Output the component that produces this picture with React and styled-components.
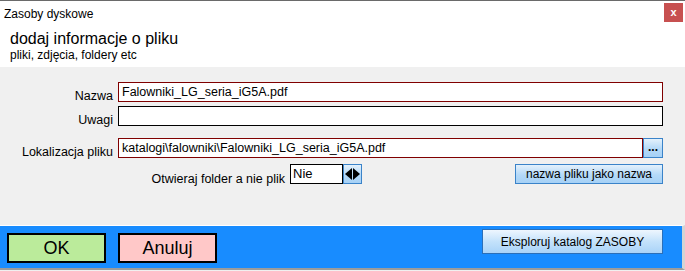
import React from "react";
import styled, { createGlobalStyle } from "styled-components";

const Global = createGlobalStyle`
  html, body { margin: 0; padding: 0; background: #f0f0f0; }
  body { font-family: "Liberation Sans", Arial, sans-serif; color: #000; }
  * { box-sizing: border-box; }
`;

const Window = styled.div`
  width: 685px;
  height: 271px;
  display: flex;
  flex-direction: column;
  background: #f0f0f0;
  border-top: 1px solid #6a6a6a;
  overflow: hidden;
`;

const Header = styled.div`
  background: #ffffff;
  height: 66px;
  display: flex;
  flex-direction: column;
`;

const TitleBar = styled.div`
  height: 24px;
  display: flex;
  align-items: flex-start;
  justify-content: space-between;
`;

const Title = styled.div`
  font-size: 12px;
  line-height: 14px;
  padding: 6px 0 0 4px;
`;

const CloseButton = styled.div`
  width: 19px;
  height: 19px;
  margin: 2px 2px 0 0;
  background: #c75050;
  color: #fff;
  font-weight: bold;
  font-size: 11px;
  line-height: 18px;
  text-align: center;
`;

const Heading = styled.div`
  margin-top: 5px;
  padding-left: 10px;
  font-size: 16px;
  line-height: 18px;
`;

const SubHeading = styled.div`
  padding-left: 10px;
  font-size: 12px;
  line-height: 14px;
`;

const Body = styled.div`
  height: 158px;
  padding-top: 15px;
`;

const FieldRow = styled.div`
  display: grid;
  grid-template-columns: 113px 545px;
  column-gap: 5px;
  align-items: end;
  margin-top: ${(p) => p.$gap || 0}px;
`;

const Label = styled.div`
  text-align: right;
  font-size: 12.5px;
  line-height: 14px;
  margin-bottom: -1px;
  white-space: nowrap;
`;

const TextBox = styled.div`
  height: 20px;
  background: #fff;
  border: 1px solid ${(p) => (p.$plain ? "#000" : "#800000")};
  font-size: 12.5px;
  line-height: 18px;
  padding-left: 3px;
  white-space: nowrap;
  overflow: hidden;
`;

const PathGroup = styled.div`
  display: flex;
`;

const PathBox = styled(TextBox)`
  flex: 1;
`;

const BlueButton = styled.div`
  background: linear-gradient(#e4f1fc, #b4d9f8 55%, #a6d1f6);
  border: 1px solid #3a83c9;
  color: #000;
  display: flex;
  align-items: center;
  justify-content: center;
  font-size: ${(p) => p.$size || 12}px;
  white-space: nowrap;
`;

const DotsButton = styled(BlueButton)`
  width: 20px;
  height: 20px;
  font-weight: bold;
  font-size: 12px;
  line-height: 12px;
  padding-bottom: 3px;
`;

const OptionRow = styled.div`
  display: flex;
  align-items: flex-end;
  margin-top: 6px;
  width: 663px;
`;

const OptionLabel = styled(Label)`
  width: 285px;
  margin-right: 5px;
  margin-bottom: -2px;
`;

const SelectBox = styled.div`
  width: 53px;
  height: 20px;
  background: #fff;
  border: 1px solid #000;
  font-size: 13px;
  line-height: 18px;
  padding-left: 2px;
`;

const SpinButton = styled(BlueButton)`
  width: 19px;
  height: 20px;
  gap: 0;
`;

const NameButton = styled(BlueButton)`
  margin-left: auto;
  width: 148px;
  height: 20px;
`;

const Footer = styled.div`
  height: 45px;
  background: #188cff;
  border-top: 1px solid #ffffff;
  border-right: 3px solid #d4d4d4;
  border-bottom: 2px solid #9c9c9c;
  display: flex;
  align-items: flex-start;
  padding: 3px 19px 0 7px;
`;

const ActionButton = styled.div`
  width: 99px;
  height: 30px;
  margin-top: 4px;
  margin-right: 12px;
  border: 2px solid #000;
  background: ${(p) => p.$bg};
  font-size: 18px;
  line-height: 26px;
  text-align: center;
`;

const ExploreButton = styled(BlueButton)`
  margin-left: auto;
  width: 181px;
  height: 25px;
  border-color: #2b6fb8;
  background: linear-gradient(#eef6fe, #c4e2fb 50%, #a9d3f8);
`;

function Arrows() {
  return (
    <svg width="15" height="12" viewBox="0 0 15 12">
      <polygon points="7,0 7,12 0,6" fill="#000" />
      <polygon points="8,0 8,12 15,6" fill="#000" />
    </svg>
  );
}

export default function App() {
  return (
    <>
      <Global />
      <Window>
        <Header>
          <TitleBar>
            <Title>Zasoby dyskowe</Title>
            <CloseButton>x</CloseButton>
          </TitleBar>
          <Heading>dodaj informacje o pliku</Heading>
          <SubHeading>pliki, zdjęcia, foldery etc</SubHeading>
        </Header>
        <Body>
          <FieldRow>
            <Label>Nazwa</Label>
            <TextBox>Falowniki_LG_seria_iG5A.pdf</TextBox>
          </FieldRow>
          <FieldRow $gap={4}>
            <Label>Uwagi</Label>
            <TextBox $plain />
          </FieldRow>
          <FieldRow $gap={12}>
            <Label>Lokalizacja pliku</Label>
            <PathGroup>
              <PathBox>katalogi\falowniki\Falowniki_LG_seria_iG5A.pdf</PathBox>
              <DotsButton>...</DotsButton>
            </PathGroup>
          </FieldRow>
          <OptionRow>
            <OptionLabel>Otwieraj folder a nie plik</OptionLabel>
            <SelectBox>Nie</SelectBox>
            <SpinButton>
              <Arrows />
            </SpinButton>
            <NameButton>nazwa pliku jako nazwa</NameButton>
          </OptionRow>
        </Body>
        <Footer>
          <ActionButton $bg="#bbeb9b">OK</ActionButton>
          <ActionButton $bg="#ffc8c8">Anuluj</ActionButton>
          <ExploreButton>Eksploruj katalog ZASOBY</ExploreButton>
        </Footer>
      </Window>
    </>
  );
}
